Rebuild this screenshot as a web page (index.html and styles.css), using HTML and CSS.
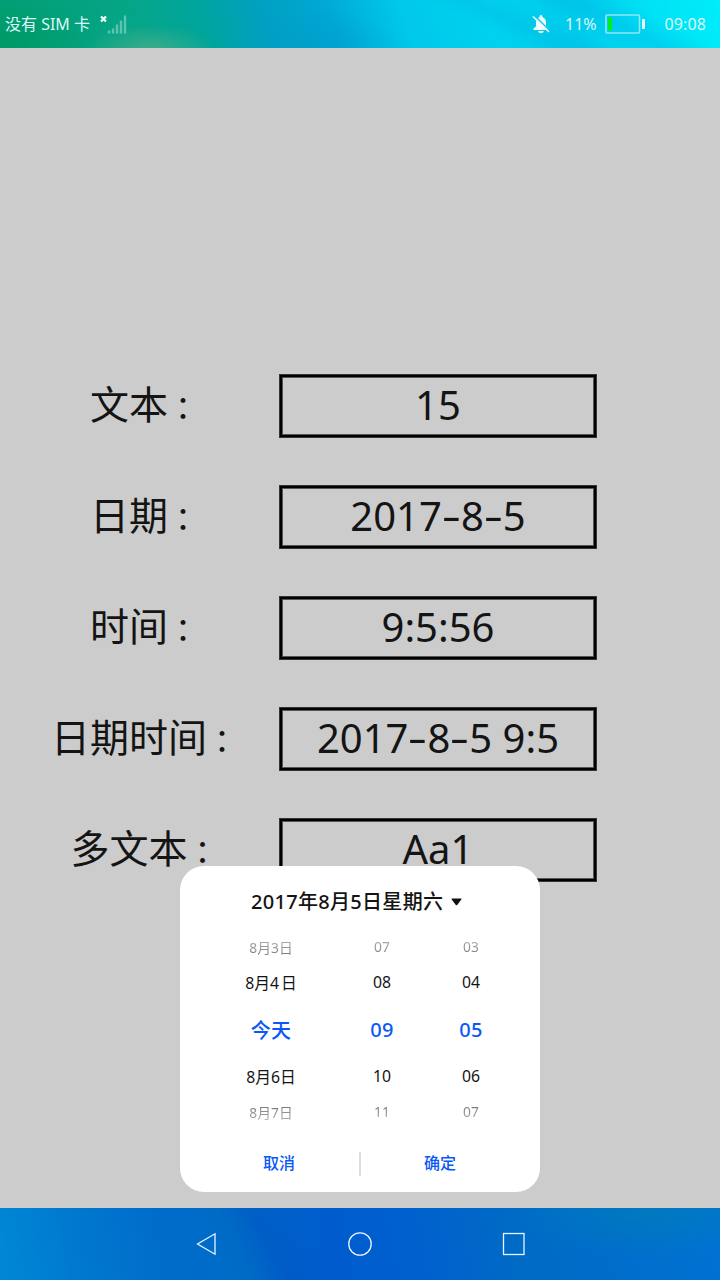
FILE: index.html
```html
<!DOCTYPE html>
<html lang="zh-CN">
<head>
<meta charset="utf-8">
<title>日期时间</title>
<link rel="stylesheet" href="styles.css">
</head>
<body>
<div class="screen">
  <header class="status">
    <span class="carrier">没有 SIM 卡</span>
    <svg class="signal" width="28" height="20" viewBox="0 0 28 20">
      <path d="M2 2.500l5 5M7 2.500l-5 5" stroke="#eefffb" stroke-width="2.300"/>
      <path d="M10 16.500v3M14 14.500v5M18 10.500v9M22 6.500v13M26 1.500v18" stroke="#fff" stroke-opacity=".35" stroke-width="2.400"/>
    </svg>
    <svg class="bell" width="20" height="20" viewBox="0 0 20 20">
      <path d="M2.500 16v-1.500l2.500-2V8.200c0-2.700 1.500-4.300 3.500-4.900V2.500a1.500 1.500 0 0 1 3 0v.8C13.700 4 15 5.700 15 8.200v4.300l2.500 2V16zM7.200 17h5.600c-.5 1.500-1.400 2.200-2.800 2.200s-2.300-.7-2.800-2.200z" fill="#eefcff"/>
      <path d="M3.500 1.500l15.500 15.500" stroke="#09cbea" stroke-width="1.500"/>
      <path d="M2 2.500l16 15.500" stroke="#eefcff" stroke-width="1.600"/>
    </svg>
    <span class="percent">11%</span>
    <svg class="battery" width="41" height="20" viewBox="0 0 41 20">
      <rect x="1" y="1" width="33.500" height="18" rx="1" fill="none" stroke="#8be9fa" stroke-width="1.600"/>
      <rect x="3" y="3.500" width="4" height="13" fill="#00f01c"/>
      <rect x="37" y="5" width="3" height="10" rx=".5" fill="#e5fbff"/>
    </svg>
    <span class="clock">09:08</span>
  </header>

  <main class="form">
    <div class="row"><div class="label">文本<span class="colon">：</span></div><div class="field">15</div></div>
    <div class="row"><div class="label">日期<span class="colon">：</span></div><div class="field">2017<span class="dash">-</span>8<span class="dash">-</span>5</div></div>
    <div class="row"><div class="label">时间<span class="colon">：</span></div><div class="field">9:5:56</div></div>
    <div class="row"><div class="label">日期时间<span class="colon">：</span></div><div class="field">2017<span class="dash">-</span>8<span class="dash">-</span>5 9:5</div></div>
    <div class="row"><div class="label">多文本<span class="colon">：</span></div><div class="field">Aa1</div></div>
  </main>

  <nav class="nav">
    <svg width="24" height="24" viewBox="0 0 24 24"><path d="M21 1.800v20.400L3.500 12z"/></svg>
    <svg width="24" height="24" viewBox="0 0 24 24"><circle cx="12" cy="12" r="11.200"/></svg>
    <svg width="24" height="24" viewBox="0 0 24 24"><rect x="1.500" y="1.500" width="20.500" height="21"/></svg>
  </nav>

  <section class="dialog">
    <h1 class="title">2017年8月5日星期六<svg width="11" height="8" viewBox="0 0 11 8"><path d="M1.200.5h8.600q1 .2.500 1L6.200 7q-.7.700-1.400 0L.7 1.500q-.5-.8.500-1z" fill="#111"/></svg></h1>
    <div class="picker">
      <div class="line far"><span>8月3日</span><span>07</span><span>03</span></div>
      <div class="line near"><span>8月4<i class="gap"></i>日</span><span>08</span><span>04</span></div>
      <div class="line current"><span>今天</span><span>09</span><span>05</span></div>
      <div class="line near"><span>8月6日</span><span>10</span><span>06</span></div>
      <div class="line far last"><span>8月7日</span><span>11</span><span>07</span></div>
    </div>
    <div class="actions"><button class="action">取消</button><span class="divider"></span><button class="action">确定</button></div>
  </section>
</div>
</body>
</html>
```
FILE: styles.css
```css
* { box-sizing: border-box; }
body {
  margin: 0;
  font-family: "Noto Sans", "Noto Sans CJK SC", sans-serif;
  color: #141414;
}
.screen {
  position: relative;
  width: 720px;
  height: 1280px;
  display: flex;
  flex-direction: column;
  overflow: hidden;
  background: #ccc;
}
.status {
  height: 48px;
  display: flex;
  align-items: center;
  padding: 0 14px 0 5px;
  font-size: 16px;
  line-height: 48px;
  color: #dcf8f8;
  white-space: nowrap;
  background:
    radial-gradient(ellipse 65px 26px at 150px 50px, rgba(80, 175, 140, .75), transparent),
    radial-gradient(ellipse 100px 60px at 0 48px, rgba(0, 150, 95, .7), transparent),
    radial-gradient(ellipse 90px 40px at 310px 48px, rgba(0, 155, 205, .5), transparent),
    linear-gradient(25deg, transparent 64%, rgba(0, 180, 225, .3) 69%, transparent 75%),
    linear-gradient(28deg, transparent 76%, rgba(0, 180, 228, .35) 82%, transparent 88%),
    linear-gradient(70deg, #00a075 0, #05a587 19%, #00a59a 28%, #00a0c0 37%, #00a8d4 46%, #00c8ea 56%, #00d2ee 68%, #00cbeb 79%, #00e1f5 90%, #00edfb 100%);
}
.carrier { width: 94px; }
.signal { margin-top: -1px; }
.bell { margin-left: 404px; }
.percent { margin-left: 14px; width: 40px; }
.battery { flex: none; }
.clock { margin-left: auto; letter-spacing: .1px; }

.form {
  height: 1160px;
  padding-top: 326px;
  display: flex;
  flex-direction: column;
  gap: 47px;
}
.row { display: flex; height: 64px; }
.label {
  width: 279px;
  padding-left: 18px;
  font-family: "Noto Sans CJK SC", sans-serif;
  font-size: 39px;
  line-height: 56px;
  text-align: center;
  white-space: nowrap;
}
.colon {
  display: inline-block;
  width: 32px;
  margin-left: 7px;
  font-size: 32px;
  line-height: 1;
  transform: translateY(-1px);
}
.field {
  width: 318px;
  border: 1px solid #333;
  box-shadow: inset 0 0 0 2px #000, inset 0 0 0 3px #555;
  font-size: 40px;
  line-height: 60px;
  text-align: center;
  white-space: nowrap;
}
.dash {
  display: inline-block;
  width: 19px;
  transform: translateY(-1px) scaleX(1.5);
}

.nav {
  height: 72px;
  display: flex;
  align-items: center;
  justify-content: center;
  gap: 130px;
  background:
    radial-gradient(ellipse 140px 50px at 650px 0, rgba(0, 130, 180, .6), transparent),
    linear-gradient(65deg, transparent 27%, rgba(0, 125, 200, .25) 33%, transparent 38%),
    linear-gradient(60deg, transparent 30%, rgba(0, 75, 190, .3) 38%, transparent 45%),
    linear-gradient(80deg, #0088d5 0, #007ad0 10%, #006dcb 22%, #0069c8 33%, #005ccd 46%, #0060ce 57%, #006bc6 72%, #006dcb 84%, #0072d3 100%);
}
.nav svg { fill: none; stroke: #e8f4ff; stroke-width: 1.3; }

.dialog {
  position: absolute;
  left: 180px;
  top: 866px;
  width: 360px;
  height: 326px;
  border-radius: 24px;
  background: #fff;
}
.title {
  margin: 0;
  height: 62px;
  padding: 4px 0 0 71px;
  font-size: 20px;
  font-weight: 500;
  line-height: 64px;
  letter-spacing: .3px;
  white-space: nowrap;
}
.title svg { margin-left: 8px; vertical-align: 3px; }
.picker { height: 200px; padding-top: 1px; }
.line {
  display: grid;
  grid-template-columns: 100px 122px 56px;
  padding-left: 41px;
  text-align: center;
  align-items: center;
}
.far {
  height: 35px;
  font-size: 13.8px;
  background: linear-gradient(#bbb 20%, #777 80%);
  background-clip: text;
  color: transparent;
}
.last { background: linear-gradient(#666 20%, #bbb 85%); background-clip: text; }
.near { height: 36px; font-size: 15.8px; }
.current { height: 58px; font-size: 20px; font-weight: 500; letter-spacing: .3px; color: #0a59f7; }
.gap { display: inline-block; width: 2px; }
.actions { display: flex; justify-content: center; align-items: center; height: 70px; padding-top: 2px; }
.action {
  width: 158px;
  padding: 0 2px 4px 0;
  border: 0;
  background: none;
  font: 500 16px "Noto Sans CJK SC", sans-serif;
  color: #0a59f7;
}
.action:last-child { padding-right: 0; }
.divider { width: 2px; height: 24px; background: #dedede; }
```
